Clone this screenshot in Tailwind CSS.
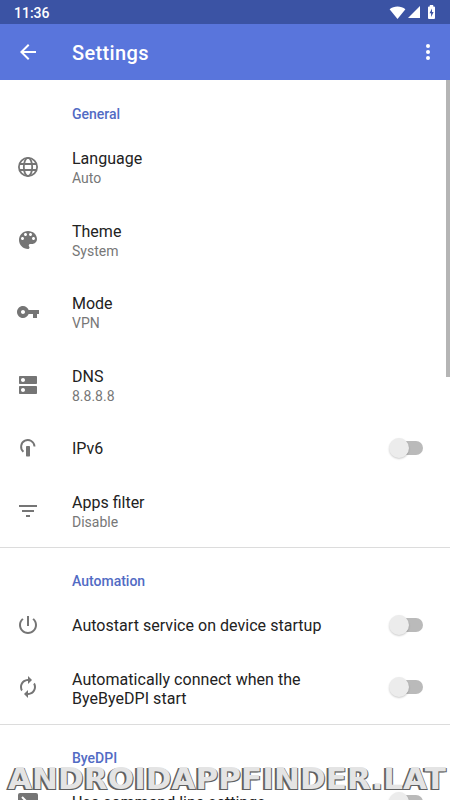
<!DOCTYPE html>
<html lang="en">
<head>
<meta charset="utf-8">
<title>Settings</title>
<script src="https://cdn.jsdelivr.net/npm/@tailwindcss/browser@4"></script>
</head>
<body class="relative flex h-[800px] w-[450px] flex-col overflow-hidden bg-white font-['Roboto',sans-serif] text-[#222]">
<header class="shrink-0 text-white">
  <div class="flex h-6 items-center bg-[#3b53a4] pl-[14px] pr-[14px]">
    <span class="pt-[2px] text-[14px] leading-5 font-medium">11:36</span>
    <svg class="ml-auto h-[13px] w-[17px]" viewBox="0 0 17 13" fill="currentColor"><path d="M8.5 13 .6 3.2C4.8-.4 12.200-.4 16.400 3.200z"/></svg>
    <svg class="ml-[2px] h-3 w-3" viewBox="0 0 12 12" fill="currentColor"><path d="M0 12H12V0z"/></svg>
    <svg class="ml-[7px] h-[14px] w-[9px]" viewBox="0 0 9 14"><path fill="currentColor" d="M1.500 1.500H2.800V0H6.200V1.500H7Q8 1.500 8 2.500V13Q8 14 7 14H2Q1 14 1 13V2.500Q1 1.500 2 1.500z"/><path fill="#3b53a4" d="M5 3.500 2.500 8.300H4.100V12L6.600 7H5z"/></svg>
  </div>
  <div class="flex h-14 items-center bg-[#5975dc] pl-4 pr-[10px]">
    <svg class="h-6 w-6" viewBox="0 0 24 24" fill="currentColor"><path d="M20 11H7.830l5.590-5.590L12 4l-8 8 8 8 1.410-1.410L7.830 13H20z"/></svg>
    <h1 class="ml-8 pt-[2px] text-[20px] font-medium tracking-[0.35px]">Settings</h1>
    <svg class="ml-auto h-6 w-6" viewBox="0 0 24 24" fill="currentColor"><circle cx="12" cy="6" r="2"/><circle cx="12" cy="12" r="2"/><circle cx="12" cy="18" r="2"/></svg>
  </div>
</header>
<main class="flex-1 overflow-hidden">
  <section class="h-[468px] border-b border-[#dcdcdc]">
    <h2 class="flex h-[51px] items-end pb-[7px] pl-[72px] text-[14px] leading-5 font-medium text-[#526bc4]">General</h2>
    <div class="flex h-[72.500px] items-center pl-4">
      <svg class="h-6 w-6 text-[#757575]" viewBox="0 0 24 24" fill="none" stroke="currentColor" stroke-width="1.800"><circle cx="12" cy="12" r="9.100"/><ellipse cx="12" cy="12" rx="4.200" ry="9.100"/><path d="M3.500 9h17M3.500 15h17"/></svg>
      <div class="ml-8 pt-[2px]"><p class="text-[16px] leading-[21px]">Language</p><p class="text-[14px] leading-[19px] text-[#777]">Auto</p></div>
    </div>
    <div class="flex h-[72.500px] items-center pl-4">
      <svg class="h-6 w-6 text-[#757575]" viewBox="0 0 24 24" fill="currentColor"><path d="M12 3c-4.970 0-9 4.030-9 9s4.030 9 9 9c.83 0 1.500-.67 1.500-1.500 0-.39-.15-.74-.39-1.010-.23-.26-.38-.61-.38-.99 0-.83.67-1.500 1.500-1.500H16c2.760 0 5-2.240 5-5 0-4.420-4.030-8-9-8zm-5.500 9c-.83 0-1.500-.67-1.500-1.500S5.670 9 6.500 9 8 9.670 8 10.500 7.330 12 6.500 12zm3-4C8.670 8 8 7.330 8 6.500S8.670 5 9.500 5s1.500.67 1.500 1.500S10.330 8 9.500 8zm5 0c-.83 0-1.500-.67-1.500-1.500S13.670 5 14.500 5s1.500.67 1.500 1.500S15.330 8 14.500 8zm3 4c-.83 0-1.500-.67-1.500-1.500S16.670 9 17.500 9s1.500.67 1.500 1.500-.67 1.500-1.500 1.500z"/></svg>
      <div class="ml-8 pt-[3px]"><p class="text-[16px] leading-[21px]">Theme</p><p class="text-[14px] leading-[19px] text-[#777]">System</p></div>
    </div>
    <div class="flex h-[72.500px] items-center pl-4">
      <svg class="h-6 w-6 text-[#757575]" viewBox="0 0 24 24" fill="currentColor"><path d="M12.650 10C11.830 7.670 9.610 6 7 6c-3.310 0-6 2.690-6 6s2.690 6 6 6c2.610 0 4.830-1.670 5.650-4H17v4h4v-4h2v-4H12.650zM7 14c-1.100 0-2-.9-2-2s.9-2 2-2 2 .9 2 2-.9 2-2 2z"/></svg>
      <div class="ml-8 pt-[2px]"><p class="text-[16px] leading-[21px]">Mode</p><p class="text-[14px] leading-[19px] text-[#777]">VPN</p></div>
    </div>
    <div class="flex h-[72.500px] items-center pl-4">
      <svg class="h-6 w-6 text-[#757575]" viewBox="0 0 24 24" fill="currentColor"><path d="M20 13H4c-.55 0-1 .45-1 1v6c0 .55.45 1 1 1h16c.55 0 1-.45 1-1v-6c0-.55-.45-1-1-1zM7 19c-1.100 0-2-.9-2-2s.9-2 2-2 2 .9 2 2-.9 2-2 2zM20 3H4c-.55 0-1 .45-1 1v6c0 .55.45 1 1 1h16c.55 0 1-.45 1-1V4c0-.55-.45-1-1-1zM7 9c-1.100 0-2-.9-2-2s.9-2 2-2 2 .9 2 2-.9 2-2 2z"/></svg>
      <div class="ml-8 pt-[3px]"><p class="text-[16px] leading-[21px]">DNS</p><p class="text-[14px] leading-[19px] text-[#777]">8.8.8.8</p></div>
    </div>
    <div class="flex h-[53.500px] items-center pl-4 pr-[26px]">
      <svg class="h-6 w-6 text-[#757575]" viewBox="0 0 24 24"><path fill="none" stroke="currentColor" stroke-width="1.900" d="M7.400 15.800A6.700 6.700 0 1 1 18.500 10.500"/><rect x="10" y="10" width="4" height="10.500" rx=".7" fill="currentColor"/></svg>
      <p class="ml-8 flex-1 pt-[3px] text-[16px]">IPv6</p>
      <div class="flex h-5 w-[35px] items-center"><span class="z-10 h-5 w-5 shrink-0 rounded-full bg-[#ececec] shadow-[0_1px_2px_rgba(0,0,0,0.2)]"></span><span class="-ml-[16px] h-[14px] w-[30px] shrink-0 rounded-full bg-[#bababa]"></span></div>
    </div>
    <div class="flex h-[72.500px] items-center pl-4">
      <svg class="h-6 w-6 text-[#757575]" viewBox="0 0 24 24" fill="currentColor"><path d="M10 18h4v-2h-4v2zM3 6v2h18V6H3zm3 7h12v-2H6v2z"/></svg>
      <div class="ml-8 pt-[3px]"><p class="text-[16px] leading-[21px]">Apps filter</p><p class="text-[14px] leading-[19px] text-[#777]">Disable</p></div>
    </div>
  </section>
  <section class="h-[177px] border-b border-[#dcdcdc]">
    <h2 class="flex h-[50px] items-end pb-[7px] pl-[72px] text-[14px] leading-5 font-medium text-[#526bc4]">Automation</h2>
    <div class="flex h-[53px] items-center pl-4 pr-[26px]">
      <svg class="h-6 w-6 text-[#757575]" viewBox="0 0 24 24" fill="currentColor"><path d="M13 3h-2v10h2V3zm4.830 2.170-1.420 1.420C17.990 7.860 19 9.810 19 12c0 3.870-3.130 7-7 7s-7-3.130-7-7c0-2.190 1.010-4.140 2.580-5.420L6.170 5.170C4.230 6.820 3 9.260 3 12c0 4.970 4.030 9 9 9s9-4.030 9-9c0-2.740-1.230-5.180-3.170-6.830z"/></svg>
      <p class="ml-8 flex-1 pt-[2px] text-[16px] tracking-[0.035px]">Autostart service on device startup</p>
      <div class="flex h-5 w-[35px] items-center"><span class="z-10 h-5 w-5 shrink-0 rounded-full bg-[#ececec] shadow-[0_1px_2px_rgba(0,0,0,0.2)]"></span><span class="-ml-[16px] h-[14px] w-[30px] shrink-0 rounded-full bg-[#bababa]"></span></div>
    </div>
    <div class="flex h-[72px] items-center pl-4 pr-[26px]">
      <svg class="h-6 w-6 text-[#757575]" viewBox="0 0 24 24" fill="currentColor"><path d="M12 6v3l4-4-4-4v3c-4.420 0-8 3.580-8 8 0 1.570.46 3.030 1.240 4.260L6.700 14.800C6.250 13.970 6 13.010 6 12c0-3.310 2.690-6 6-6zm6.760 1.740L17.300 9.200c.44.840.7 1.790.7 2.800 0 3.310-2.690 6-6 6v-3l-4 4 4 4v-3c4.420 0 8-3.580 8-8 0-1.570-.46-3.030-1.240-4.260z"/></svg>
      <p class="ml-8 flex-1 pt-[4px] text-[16px] leading-[19px] tracking-[0.035px]">Automatically connect when the<br>ByeByeDPI start</p>
      <div class="flex h-5 w-[35px] items-center"><span class="z-10 h-5 w-5 shrink-0 rounded-full bg-[#ececec] shadow-[0_1px_2px_rgba(0,0,0,0.2)]"></span><span class="-ml-[16px] h-[14px] w-[30px] shrink-0 rounded-full bg-[#bababa]"></span></div>
    </div>
  </section>
  <section>
    <h2 class="flex h-[50px] items-end pb-[7px] pl-[72px] text-[14px] leading-5 font-medium text-[#526bc4]">ByeDPI</h2>
    <div class="flex h-[53px] items-center pl-4 pr-[26px]">
      <svg class="h-6 w-6 text-[#757575]" viewBox="0 0 24 24"><rect x="2" y="3" width="20" height="18" rx="2" fill="currentColor"/><path d="m6 7 4 4-4 4M12 16h6" fill="none" stroke="#fff" stroke-width="2"/></svg>
      <p class="ml-8 flex-1 pt-[2px] text-[16px]">Use command line settings</p>
      <div class="flex h-5 w-[35px] items-center"><span class="z-10 h-5 w-5 shrink-0 rounded-full bg-[#ececec] shadow-[0_1px_2px_rgba(0,0,0,0.2)]"></span><span class="-ml-[16px] h-[14px] w-[30px] shrink-0 rounded-full bg-[#bababa]"></span></div>
    </div>
  </section>
</main>
<div class="absolute top-20 right-0 h-[297px] w-1 bg-[#b5b5b5]"></div>
<div class="absolute top-[760px] left-[8px] z-20 text-[31px] leading-[36px] font-bold tracking-[0.05px] whitespace-nowrap text-[#e4e4e4] font-['DejaVu_Sans',sans-serif] [text-shadow:-1px_1px_0_#606060,-2px_1px_0_#606060,1px_1px_0_#606060]">ANDROIDAPPFINDER.LAT</div>
</body>
</html>
